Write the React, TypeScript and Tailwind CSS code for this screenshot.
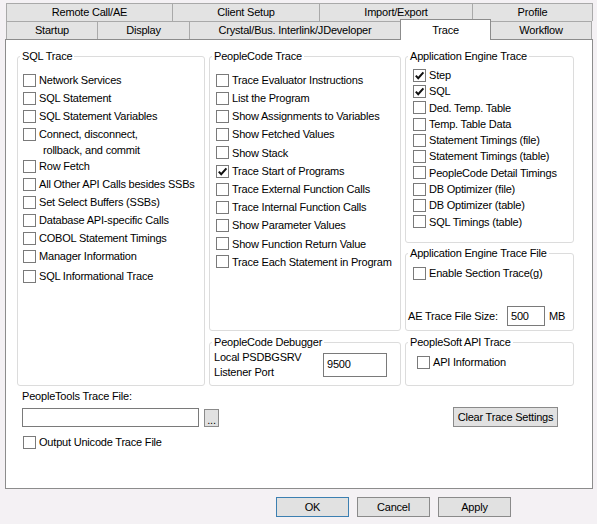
import React from "react";

// Trace tab of the PeopleTools configuration dialog

const ROW1 = [
  { label: "Remote Call/AE", w: "w-[166px]" },
  { label: "Client Setup", w: "w-[147px]" },
  { label: "Import/Export", w: "w-[153px]" },
  { label: "Profile", w: "w-[121px] border-r" },
];

const SQL_TRACE = [
  "Network Services",
  "SQL Statement",
  "SQL Statement Variables",
];

const SQL_TRACE_REST = [
  "Row Fetch",
  "All Other API Calls besides SSBs",
  "Set Select Buffers (SSBs)",
  "Database API-specific Calls",
  "COBOL Statement Timings",
  "Manager Information",
];

const PEOPLECODE_TRACE: { label: string; checked?: boolean }[] = [
  { label: "Trace Evaluator Instructions" },
  { label: "List the Program" },
  { label: "Show Assignments to Variables" },
  { label: "Show Fetched Values" },
  { label: "Show Stack" },
  { label: "Trace Start of Programs", checked: true },
  { label: "Trace External Function Calls" },
  { label: "Trace Internal Function Calls" },
  { label: "Show Parameter Values" },
  { label: "Show Function Return Value" },
  { label: "Trace Each Statement in Program" },
];

const AE_TRACE: { label: string; checked?: boolean }[] = [
  { label: "Step", checked: true },
  { label: "SQL", checked: true },
  { label: "Ded. Temp. Table" },
  { label: "Temp. Table Data" },
  { label: "Statement Timings (file)" },
  { label: "Statement Timings (table)" },
  { label: "PeopleCode Detail Timings" },
  { label: "DB Optimizer (file)" },
  { label: "DB Optimizer (table)" },
  { label: "SQL Timings (table)" },
];

function Check({ checked }: { checked?: boolean }) {
  return (
    <span className="flex h-[13px] w-[13px] shrink-0 items-center justify-center border border-[#7a7a7a] bg-white">
      {checked && (
        <svg viewBox="0 0 11 11" className="h-[11px] w-[11px]">
          <path d="M1.8 5.6 L4.2 8.2 L9.4 2.4" fill="none" stroke="#111" strokeWidth="2" />
        </svg>
      )}
    </span>
  );
}

function CheckRow({
  label,
  checked,
  h = "h-[18px]",
}: {
  label: string;
  checked?: boolean;
  h?: string;
}) {
  return (
    <div className={`flex items-center gap-[3px] ${h}`}>
      <Check checked={checked} />
      <span className="whitespace-nowrap">{label}</span>
    </div>
  );
}

function Group({
  title,
  className,
  children,
}: {
  title: string;
  className: string;
  children: React.ReactNode;
}) {
  return (
    <fieldset className={`rounded-[3px] border border-[#dcdcdc] ${className}`}>
      <legend className="ml-[2px] px-[2px] leading-[13px]">{title}</legend>
      {children}
    </fieldset>
  );
}

function Button({ label, className = "" }: { label: string; className?: string }) {
  return (
    <div
      className={`flex h-[20px] items-center justify-center border bg-[#e1e1e1] ${className}`}
    >
      {label}
    </div>
  );
}

export default function App() {
  return (
    <div className="h-[524px] w-[597px] overflow-hidden bg-[#f4f1f4] pl-[5px] pt-[3px] font-['Liberation_Sans',Arial,sans-serif] text-[11px] tracking-[-0.2px] text-black">
      {/* Tab strip, two rows */}
      <div className="ml-[1px] flex h-[18px]">
        {ROW1.map((t) => (
          <div
            key={t.label}
            className={`flex items-center justify-center border-l border-t border-[#a9a9a9] bg-[#e3e3e3] ${t.w}`}
          >
            {t.label}
          </div>
        ))}
      </div>
      <div className="relative z-10 -mt-[2px] ml-[1px] flex h-[20px] items-end">
        <div className="flex h-[18px] w-[91px] items-center justify-center border-l border-t border-[#a9a9a9] bg-[#e3e3e3]">
          Startup
        </div>
        <div className="flex h-[18px] w-[92px] items-center justify-center border-l border-t border-[#a9a9a9] bg-[#e3e3e3]">
          Display
        </div>
        <div className="flex h-[18px] w-[211px] items-center justify-center border-l border-t border-[#a9a9a9] bg-[#e3e3e3]">
          Crystal/Bus. Interlink/JDeveloper
        </div>
        <div className="-mb-[1px] flex h-[21px] w-[91px] items-start justify-center border-x border-t border-[#8c8c8c] bg-white pt-[2px]">
          Trace
        </div>
        <div className="flex h-[18px] w-[101px] items-center justify-center border-r border-t border-[#a9a9a9] bg-[#e3e3e3]">
          Workflow
        </div>
      </div>

      {/* Tab page */}
      <div className="h-[450px] w-[588px] border border-[#8c8c8c] bg-white pl-[11px] pt-[10px]">
        <div className="flex items-start gap-[4px]">
          <Group title="SQL Trace" className="h-[336px] w-[188px]">
            <div className="pl-[5px] pt-[8px]">
              {SQL_TRACE.map((l) => (
                <CheckRow key={l} label={l} />
              ))}
              <div className="flex h-[32px] items-start gap-[3px] pt-[3px]">
                <Check />
                <div className="-mt-[2px] leading-[16px]">
                  <div>Connect, disconnect,</div>
                  <div className="pl-[4px]">rollback, and commit</div>
                </div>
              </div>
              {SQL_TRACE_REST.map((l) => (
                <CheckRow key={l} label={l} />
              ))}
              <div className="mt-[2px]">
                <CheckRow label="SQL Informational Trace" />
              </div>
            </div>
          </Group>

          <div className="flex w-[192px] flex-col gap-[5px]">
            <Group title="PeopleCode Trace" className="h-[281px]">
              <div className="pl-[6px] pt-[8px]">
                {PEOPLECODE_TRACE.map((it) => (
                  <CheckRow key={it.label} label={it.label} checked={it.checked} h="h-[18.2px]" />
                ))}
              </div>
            </Group>
            <Group title="PeopleCode Debugger" className="h-[50px]">
              <div className="flex items-start pl-[4px]">
                <div className="w-[109px] pt-[1px] leading-[15px]">
                  <div>Local PSDBGSRV</div>
                  <div>Listener Port</div>
                </div>
                <div className="mt-[4px] flex h-[24px] w-[64px] items-center border border-[#7a7a7a] pb-[1px] pl-[3px]">
                  9500
                </div>
              </div>
            </Group>
          </div>

          <div className="flex w-[169px] flex-col">
            <Group title="Application Engine Trace" className="h-[193px]">
              <div className="pl-[7px] pt-[4px]">
                {AE_TRACE.map((it) => (
                  <CheckRow key={it.label} label={it.label} checked={it.checked} h="h-[16.3px]" />
                ))}
              </div>
            </Group>
            <Group title="Application Engine Trace File" className="mt-[4px] h-[84px]">
              <div className="pl-[7px] pt-[5px]">
                <CheckRow label="Enable Section Trace(g)" h="h-[16px]" />
              </div>
              <div className="mt-[25px] flex items-center pl-[2px]">
                <span className="w-[99px] whitespace-nowrap">AE Trace File Size:</span>
                <div className="flex h-[20px] w-[38px] items-center border border-[#7a7a7a] pl-[3px]">
                  500
                </div>
                <span className="ml-[4px]">MB</span>
              </div>
            </Group>
            <Group title="PeopleSoft API Trace" className="mt-[5px] h-[50px]">
              <div className="pl-[11px] pt-[5px]">
                <CheckRow label="API Information" h="h-[16px]" />
              </div>
            </Group>
          </div>
        </div>

        {/* Trace file and clear button */}
        <div className="flex items-start">
          <div className="pl-[5px] pt-[4px]">
            <div className="leading-[13px]">PeopleTools Trace File:</div>
            <div className="mt-[5px] flex items-start gap-[5px]">
              <div className="h-[19px] w-[177px] border border-[#7a7a7a] bg-white" />
              <div className="mt-[1px] flex h-[18px] w-[15px] items-end justify-center border border-[#8a8a8a] bg-[#e1e1e1] pb-[2px] leading-[8px]">
                ...
              </div>
            </div>
            <div className="mt-[6px] pl-[1px]">
              <CheckRow label="Output Unicode Trace File" />
            </div>
          </div>
          <Button
            label="Clear Trace Settings"
            className="ml-auto mr-[34px] mt-[21px] w-[105px] border-[#8a8a8a]"
          />
        </div>
      </div>

      {/* Dialog buttons */}
      <div className="mt-[8px] flex justify-end gap-[8px] pr-[86px]">
        <Button label="OK" className="w-[73px] border-[#3c7fb1]" />
        <Button label="Cancel" className="w-[73px] border-[#8a8a8a]" />
        <Button label="Apply" className="w-[73px] border-[#8a8a8a]" />
      </div>
    </div>
  );
}
